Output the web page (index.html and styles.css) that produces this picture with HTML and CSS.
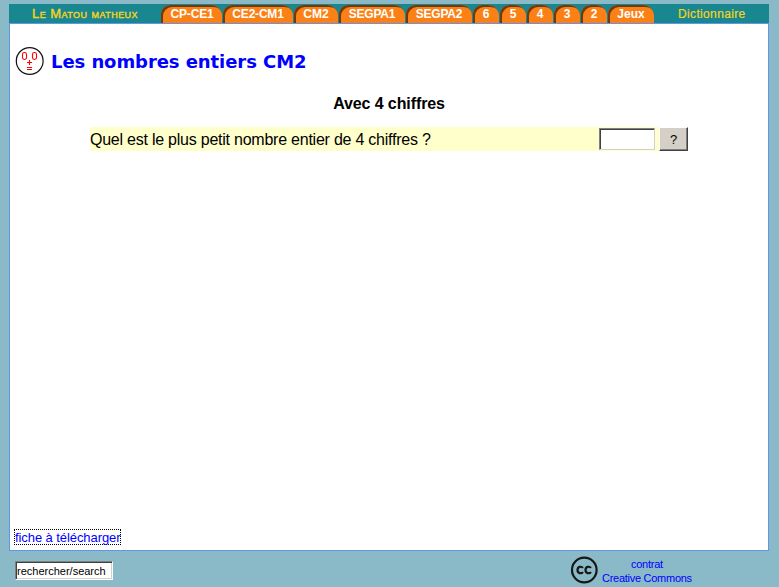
FILE: index.html
```html
<!DOCTYPE html>
<html lang="fr">
<head>
<meta charset="utf-8">
<title>Le Matou matheux</title>
<link rel="stylesheet" href="styles.css">
</head>
<body>
<div class="page">
  <nav class="bar">
    <a class="brand">Le Matou matheux</a>
    <div class="tabs">
      <a class="tab t-cp">CP-CE1</a>
      <a class="tab t-ce">CE2-CM1</a>
      <a class="tab t-cm">CM2</a>
      <a class="tab t-s1">SEGPA1</a>
      <a class="tab t-s2">SEGPA2</a>
      <a class="tab">6</a>
      <a class="tab">5</a>
      <a class="tab">4</a>
      <a class="tab">3</a>
      <a class="tab">2</a>
      <a class="tab t-jeux">Jeux</a>
    </div>
    <a class="dico">Dictionnaire</a>
  </nav>
  <main class="content">
    <header class="heading">
      <svg class="face" width="30" height="30" viewBox="0 0 30 30" fill="none">
        <circle cx="14.700" cy="15" r="13.400" stroke="#111" stroke-width="1.200"/>
        <g stroke="#f00" stroke-width="1.100">
          <rect x="7.500" y="6.500" width="4" height="7" rx="1.900"/>
          <rect x="17.500" y="6.500" width="4" height="7" rx="1.900"/>
          <path d="M12 16.500h5M14.500 14v5M12 21.500h5M12 23.500h5"/>
        </g>
      </svg>
      <h1>Les nombres entiers CM2</h1>
    </header>
    <h2>Avec 4 chiffres</h2>
    <form class="question">
      <span class="text">Quel est le plus petit nombre entier de 4 chiffres ?</span>
      <input class="answer" type="text">
      <button class="check" type="button">?</button>
    </form>
    <a class="sheet">fiche à télécharger</a>
  </main>
  <footer class="footer">
    <input class="search" type="text" value="rechercher/search">
    <div class="license">
      <svg width="28" height="28" viewBox="0 0 28 28" fill="none" stroke="#171717">
        <circle cx="14.300" cy="14" r="12.300" stroke-width="2.200"/>
        <path stroke-width="2.200" d="M13 11.900C11.300 9.900 7.500 10.600 7.500 14s3.800 4.100 5.500 2.100M21 11.900C19.300 9.900 15.500 10.600 15.500 14s3.800 4.100 5.500 2.100"/>
      </svg>
      <a class="cc">contrat<br>Creative Commons</a>
    </div>
  </footer>
</div>
</body>
</html>
```
FILE: styles.css
```css
* { box-sizing: border-box; }
body {
  margin: 0;
  background: #8abac8;
  font-family: "Liberation Sans", Arial, sans-serif;
  overflow: hidden;
}
.page { width: 760px; margin: 4px 0 0 9px; }
.bar {
  display: flex;
  height: 19px;
  background: #188790;
  font-size: 12px;
  line-height: 19px;
  white-space: nowrap;
}
.brand {
  width: 152px;
  padding-left: 23px;
  color: #f8d31b;
  font-variant: small-caps;
  font-size: 13px;
  letter-spacing: 0.45px;
  -webkit-text-stroke: 0.4px #f8d31b;
}
.tabs { display: flex; gap: 1px; padding-top: 1px; }
.tab {
  width: 26px;
  height: 18px;
  border-radius: 9px 11px 0 0;
  background: #fb8116;
  box-shadow: inset 2px 2px 0 #713a0e;
  color: #fff;
  font-weight: bold;
  line-height: 19px;
  text-align: center;
}
.t-cp { width: 61px; padding-left: 1px; letter-spacing: -0.2px; }
.t-ce { width: 70px; letter-spacing: -0.2px; }
.t-cm { width: 44px; }
.t-s1 { width: 66px; letter-spacing: -0.2px; }
.t-s2 { width: 66px; letter-spacing: -0.2px; }
.t-jeux { width: 46px; }
.dico {
  margin-left: 24px;
  color: #f8d31b;
  font-size: 12px;
  line-height: 21px;
  letter-spacing: 0.35px;
  -webkit-text-stroke: 0.2px #f8d31b;
}
.content {
  display: flex;
  flex-direction: column;
  height: 528px;
  border: 1px solid #6495ed;
  background: #fff;
}
.heading { display: flex; align-items: center; gap: 6px; height: 52px; padding: 22px 0 0 5px; }
.face { flex: none; }
h1 {
  margin: 0;
  padding-top: 2px;
  color: #00f;
  font: bold 18px/28px "DejaVu Sans", Verdana, sans-serif;
  letter-spacing: -0.07px;
  white-space: nowrap;
}
h2 {
  margin: 18px 0 0;
  font-size: 16px;
  line-height: 20px;
  letter-spacing: -0.1px;
  text-align: center;
}
.question {
  display: flex;
  width: 598px;
  height: 24px;
  margin: 13px 0 0 80px;
  background: linear-gradient(#ffc, #ffc) 0 0 / 569px 24px no-repeat;
}
.text {
  width: 509px;
  font-size: 16px;
  line-height: 26px;
  letter-spacing: -0.235px;
  white-space: nowrap;
}
.answer {
  width: 56px;
  height: 22px;
  margin-top: 1px;
  border: 1px solid;
  border-color: #808080 #d4d0c8 #d4d0c8 #808080;
  box-shadow: inset 1px 1px #404048;
  background: #fff;
}
.check {
  width: 29px;
  height: 24px;
  margin-left: 4px;
  padding: 0;
  border: 1px solid;
  border-color: #fff #404040 #404040 #fff;
  box-shadow: inset -1px -1px #808080;
  background: #d4d0c8;
  color: #000;
  font: 13px "Liberation Sans", Arial, sans-serif;
}
.sheet {
  align-self: flex-start;
  width: 107px;
  height: 16px;
  margin: auto 0 5px 4px;
  border: 1px dotted #000;
  color: #00f;
  font-size: 13px;
  line-height: 15px;
  letter-spacing: -0.08px;
  white-space: nowrap;
}
.footer { display: flex; height: 36px; }
.search {
  width: 98px;
  height: 19px;
  margin: 10px 0 0 6px;
  padding: 0 0 0 1px;
  border: 1px solid;
  border-color: #808080 #fff #fff #808080;
  box-shadow: inset 1px 1px #404040, inset -1px -1px #d4d0c8;
  background: #fff;
  color: #000;
  font: 11px "Liberation Sans", Arial, sans-serif;
}
.license { display: flex; gap: 4px; margin: 5px 0 0 457px; }
.cc {
  padding-top: 1px;
  color: #00f;
  font-size: 11px;
  line-height: 14px;
  letter-spacing: -0.27px;
  text-align: center;
  white-space: nowrap;
}
```
